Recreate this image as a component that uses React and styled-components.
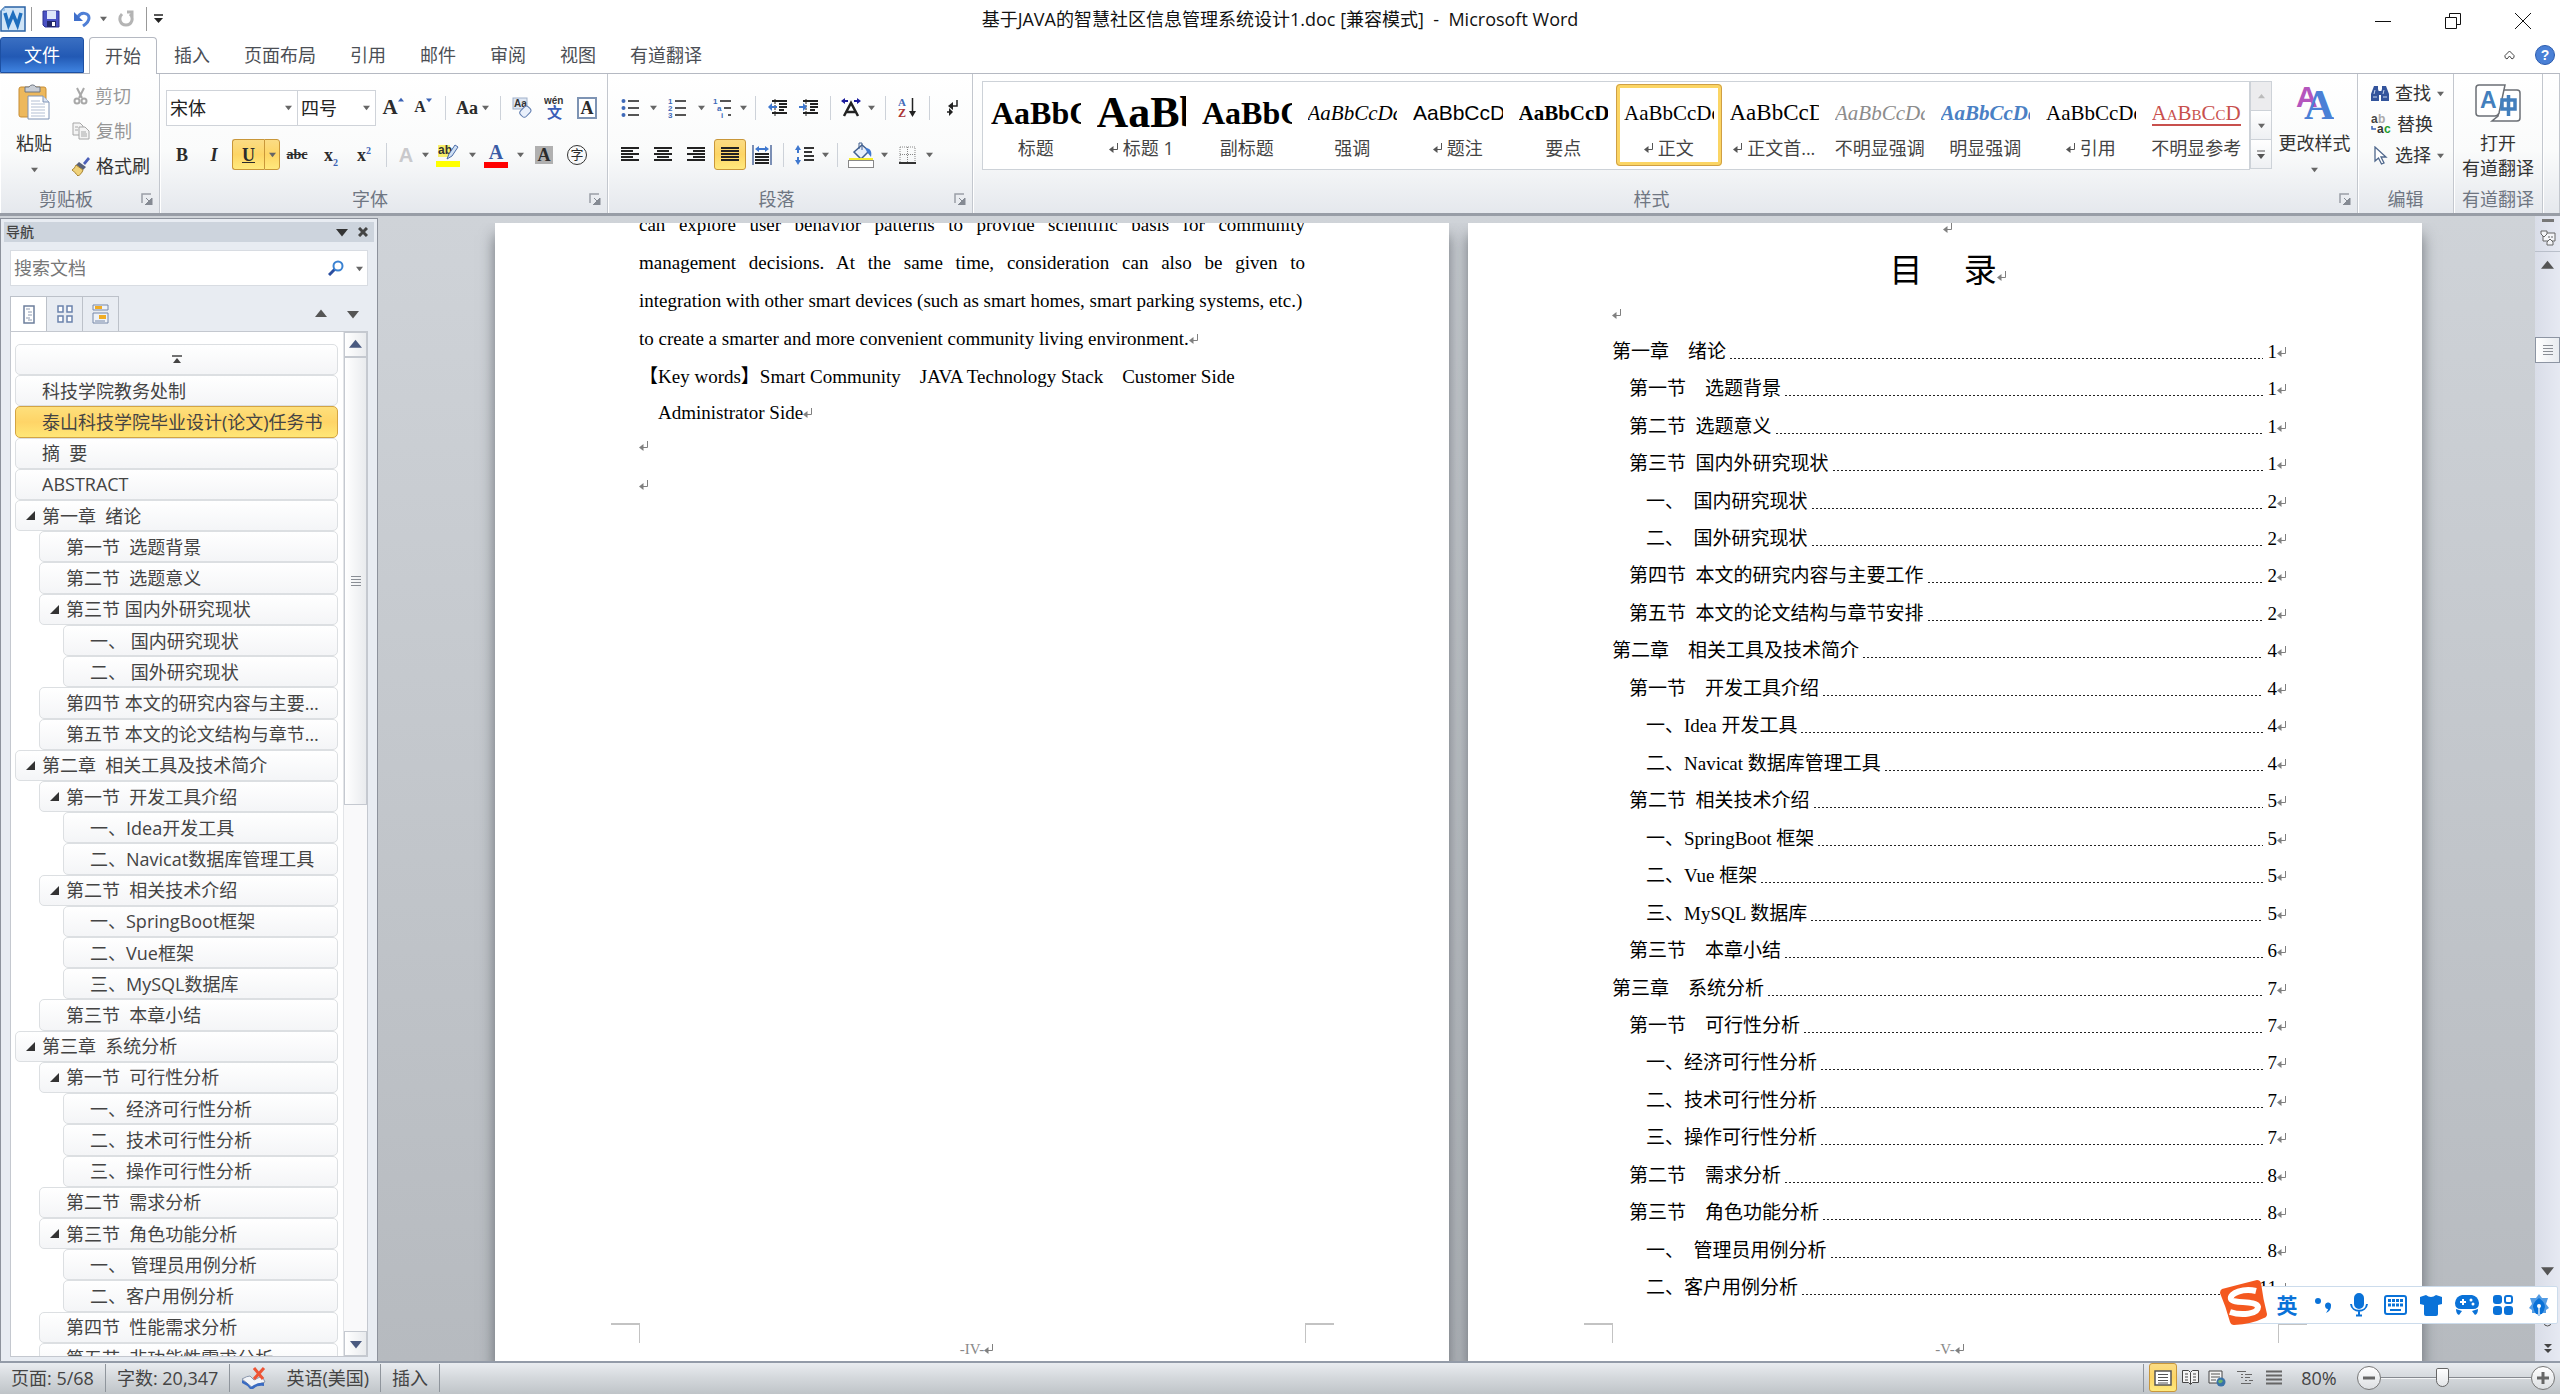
import styled, { createGlobalStyle, css } from "styled-components";

const GlobalStyle = createGlobalStyle`
  * {
    box-sizing: border-box;
  }

  body {
    margin: 0;
    overflow: hidden;
    font-family: "Open Sans", "Noto Sans CJK SC", sans-serif;
    font-size: 18px;
    line-height: 24px;
    color: #333;
  }

  button,
  input,
  select {
    font: inherit;
    color: inherit;
    padding: 0;
    border: none;
    background: none;
  }

  a {
    color: inherit;
    text-decoration: none;
  }

  svg {
    display: block;
    flex-shrink: 0;
  }
`;

const Window = styled.div`
  height: 100vh;
  display: flex;
  flex-direction: column;
  background: #fff;
`;

/* ---------- title bar ---------- */

const TitleBar = styled.header`
  height: 37px;
  display: grid;
  grid-template-columns: 1fr auto 1fr;
  align-items: center;
  flex-shrink: 0;
`;

const QuickAccess = styled.div`
  display: flex;
  align-items: center;
  height: 32px;
`;

const Title = styled.h1`
  margin: 0;
  font-size: 18px;
  font-weight: 400;
  color: #111;
  white-space: pre;
`;

const WindowButtons = styled.div`
  display: flex;
  justify-content: flex-end;
  padding: 5px 2px 0 0;
`;

const WindowButton = styled.button`
  width: 70px;
  height: 32px;
  display: flex;
  align-items: center;
  justify-content: center;
`;

const Slot = styled.button`
  width: ${(props) => props.$w}px;
  height: 30px;
  display: flex;
  align-items: ${(props) => (props.$top ? "flex-start" : "center")};
  padding-top: ${(props) => (props.$top ? 4 : 0)}px;
  justify-content: center;
  flex-shrink: 0;
`;

const SepBox = styled.span`
  width: ${(props) => props.$w}px;
  display: flex;
  justify-content: center;
  flex-shrink: 0;

  &::before {
    content: "";
    width: 1px;
    height: ${(props) => props.$h || 24}px;
    background: ${(props) => props.$color || "#cdd2d9"};
  }
`;

/* ---------- ribbon tabs ---------- */

const TabRow = styled.nav`
  height: 37px;
  display: flex;
  align-items: flex-end;
  flex-shrink: 0;
  border-bottom: 1px solid #b5b9c2;
`;

const FileTab = styled.button`
  width: 84px;
  height: 36px;
  margin-right: 5px;
  color: #fff;
  border: 1px solid #1d50a3;
  border-radius: 3px 3px 0 0;
  background: linear-gradient(#3a6fc2, #2259b4 55%, #3f83e0);
`;

const Tab = styled.button`
  height: 36px;
  padding: 0 17px;
  color: #4c4f55;

  ${(props) =>
    props.$active &&
    css`
      padding: 0 15px;
      margin-bottom: -1px;
      height: 37px;
      border: 1px solid #b5b9c2;
      border-bottom: none;
      border-radius: 4px 4px 0 0;
      background: #fff;
    `}
`;

const HelpArea = styled.div`
  margin-left: auto;
  display: flex;
  align-items: center;
  gap: 20px;
  height: 36px;
  padding-right: 5px;
`;

/* ---------- ribbon ---------- */

const Ribbon = styled.div`
  height: 142px;
  display: flex;
  flex-shrink: 0;
  background: linear-gradient(#fff, #fafbfb 55%, #e5e8ed);
  border-bottom: 3px solid #989da6;
`;

const Group = styled.section`
  width: ${(props) => (props.$w ? `${props.$w}px` : "auto")};
  flex: ${(props) => (props.$w ? "none" : "1")};
  display: flex;
  flex-direction: column;
  border-right: 1px solid #c3c7ce;
  box-shadow: inset 1px 0 #fff;
  min-width: 0;
`;

const GroupBody = styled.div`
  height: 111px;
  display: flex;
  padding-left: ${(props) => props.$pl || 0}px;
`;

const GroupFooter = styled.footer`
  display: flex;
  align-items: center;
  height: 28px;
  color: #6f7682;
  white-space: nowrap;

  span {
    flex: 1;
    text-align: center;
  }

  button {
    width: 27px;
    display: flex;
    justify-content: flex-end;
    padding-right: 6px;
  }
`;

const BigButton = styled.button`
  width: ${(props) => props.$w}px;
  display: flex;
  flex-direction: column;
  align-items: center;
  padding-top: 10px;
  white-space: nowrap;

  span {
    margin: 11px 0;
  }
`;

const SideList = styled.div`
  display: flex;
  flex-direction: column;
  gap: ${(props) => props.$gap}px;
  padding: ${(props) => props.$pt}px 0 0 4px;
`;

const SideButton = styled.button`
  display: flex;
  align-items: center;
  gap: 6px;
  height: 24px;
  white-space: nowrap;
  opacity: ${(props) => (props.$dim ? 0.5 : 1)};
`;

const ToolRow = styled.div`
  display: flex;
  align-items: center;
  height: 47px;
`;

const ToolRows = styled.div`
  padding-top: 10px;
`;

const ComboBox = styled.div`
  width: ${(props) => props.$w}px;
  height: 36px;
  display: flex;
  align-items: center;
  border: 1px solid #cfd3d9;
  background: #fff;

  & + & {
    border-left: none;
  }

  select {
    appearance: none;
    flex: 1;
    min-width: 0;
    padding-left: 3px;
    color: #222;
    outline: none;
  }

  svg {
    margin-right: 5px;
  }
`;

const HotButton = styled.button`
  height: 31px;
  width: ${(props) => props.$w}px;
  display: flex;
  align-items: center;
  justify-content: center;
  flex-shrink: 0;
  border: 1px solid #c9973a;
  border-radius: 3px;
  background: linear-gradient(#fbdc84, #fdd565 50%, #ffe97d);
`;

const SplitHot = styled.div`
  display: flex;
  margin-left: 2px;

  ${HotButton}:first-child {
    border-radius: 3px 0 0 3px;
    border-right: none;
  }

  ${HotButton}:last-child {
    border-radius: 0 3px 3px 0;
  }
`;

const Glyph = styled.span`
  font-family: ${(props) =>
    props.$sans ? '"Liberation Sans"' : '"Liberation Serif"'},
    "Noto Sans CJK SC", serif;
  font-size: ${(props) => props.$size || 18}px;
  line-height: 20px;
  font-weight: ${(props) => (props.$light ? 400 : 700)};
  font-style: ${(props) => (props.$italic ? "italic" : "normal")};
  text-decoration: ${(props) => props.$line || "none"};
  color: ${(props) => props.$color || "#2b2b2b"};

  sup,
  sub {
    font-size: 10px;
    line-height: 0;
    color: #3a62b5;
  }
`;

const BoxedA = styled(Glyph)`
  width: ${(props) => (props.$filled ? 18 : 20)}px;
  height: ${(props) => (props.$filled ? 18 : 22)}px;
  line-height: 18px;
  text-align: center;
  border: ${(props) => (props.$filled ? "none" : "2px solid #7d93b3")};
  background: ${(props) => (props.$filled ? "#b0b0b0" : "#fff")};
`;

const CircledChar = styled(Glyph)`
  width: 20px;
  height: 20px;
  line-height: 18px;
  text-align: center;
  border: 1px solid #333;
  border-radius: 50%;
`;

const ColorBarButton = styled(Slot)`
  flex-direction: column;

  &::after {
    content: "";
    width: 24px;
    height: 6px;
    background: ${(props) => props.$bar};
    border: ${(props) => (props.$outline ? "1px solid #888" : "none")};
  }
`;

/* ---------- style gallery ---------- */

const GalleryWrap = styled.div`
  flex: 1;
  min-width: 0;
  display: flex;
  padding: 7px 0 0 9px;
`;

const Gallery = styled.div`
  flex: 1;
  min-width: 0;
  height: 89px;
  display: flex;
  background: #fff;
  border: 1px solid #cdd2d8;
`;

const StyleCard = styled.button`
  flex: 1 1 0;
  min-width: 0;
  height: 82px;
  margin-top: 2px;
  padding: 0 4px;
  border: 4px solid transparent;
  border-radius: 4px;

  ${(props) =>
    props.$active &&
    css`
      border-color: #fbd564;
      outline: 1px solid #cf9f45;
      outline-offset: -1px;
    `}
`;

const Preview = styled.div`
  height: 46px;
  line-height: 50px;
  overflow: hidden;
  text-align: left;
  white-space: nowrap;
  font-family: ${(props) =>
    props.$sans ? '"Liberation Sans", sans-serif' : '"Liberation Serif", serif'};
  font-size: ${(props) => props.$size || 21}px;
  font-weight: ${(props) => (props.$bold ? 700 : 400)};
  font-style: ${(props) => (props.$italic ? "italic" : "normal")};
  font-variant: ${(props) => (props.$caps ? "small-caps" : "normal")};
  text-decoration: ${(props) => (props.$caps ? "underline" : "none")};
  text-underline-offset: 4px;
  color: ${(props) => props.$color || "#000"};
`;

const StyleName = styled.div`
  display: flex;
  align-items: center;
  justify-content: center;
  gap: 4px;
  height: 28px;
  white-space: nowrap;
  color: #444;
`;

const GalleryScroll = styled.div`
  width: 22px;
  height: 88px;
  display: flex;
  flex-direction: column;

  button {
    flex: 1;
    display: flex;
    align-items: center;
    justify-content: center;
    border: 1px solid #cdd2d8;
    border-bottom: none;
    background: linear-gradient(#fff, #eef0f3);
  }

  button:first-child {
    background: #ececee;
  }

  button:last-child {
    border-bottom: 1px solid #cdd2d8;
  }
`;

/* ---------- work area ---------- */

const WorkArea = styled.main`
  flex: 1;
  min-height: 0;
  display: flex;
  background: linear-gradient(#cfd3d8, #b6babf);
`;

const NavPane = styled.aside`
  width: 378px;
  flex-shrink: 0;
  display: flex;
  flex-direction: column;
  margin-top: 2px;
  padding: 3px 3px 4px;
  background: #e8ecf2;
  border: 1px solid #8d929c;
  border-bottom: none;
`;

const NavHeader = styled.div`
  height: 20px;
  display: flex;
  align-items: center;
  gap: 10px;
  padding: 0 6px 0 2px;
  background: #cdd4dd;
  font-size: 14px;
  line-height: 20px;
  flex-shrink: 0;

  h2 {
    margin: 0 auto 0 0;
    font-size: 14px;
    font-weight: 500;
    color: #444;
  }

  button {
    display: flex;
  }
`;

const SearchBox = styled.form`
  height: 36px;
  margin: 8px 6px 10px;
  display: flex;
  align-items: center;
  gap: 12px;
  padding: 0 4px 0 3px;
  background: #fff;
  border: 1px solid #d8dce2;
  flex-shrink: 0;

  input {
    flex: 1;
    min-width: 0;
    outline: none;
  }

  input::placeholder {
    color: #777;
  }
`;

const NavTabs = styled.div`
  display: flex;
  height: 36px;
  margin: 0 6px;
  flex-shrink: 0;
`;

const NavTab = styled.button`
  width: 37px;
  height: 36px;
  margin-right: -1px;
  display: flex;
  align-items: center;
  justify-content: center;
  border: 1px solid #bcc1c9;
  ${(props) =>
    props.$active &&
    css`
      background: #fff;
      border-bottom-color: #fff;
    `}
`;

const NavArrows = styled.div`
  margin-left: auto;
  display: flex;
  gap: 20px;
  padding-right: 9px;

  button {
    display: flex;
    align-items: center;
  }
`;

const NavBody = styled.div`
  flex: 1;
  min-height: 0;
  display: flex;
  margin: -1px 6px 0;
  background: #fff;
  border: 1px solid #c4c8cf;
`;

const NavList = styled.div`
  flex: 1;
  min-width: 0;
  padding: 12px 5px 0 4px;
  overflow: hidden;
`;

const NavTree = styled.nav`
  height: 1030px;
  display: grid;
  grid-auto-rows: 1fr;
`;

const NavItem = styled.a`
  margin-left: ${(props) => props.$level * 24}px;
  display: flex;
  align-items: center;
  padding-right: 8px;
  border: 1px solid #dcdfe2;
  border-radius: 5px;
  background: linear-gradient(#fff, #f4f5f7);
  color: #444;
  white-space: pre;
  min-width: 0;

  ${(props) =>
    props.$active &&
    css`
      border-color: #d3a443;
      background: linear-gradient(#fee07c, #fed467 50%, #ffe777);
    `}

  span {
    overflow: hidden;
    text-overflow: ellipsis;
  }
`;

const NavTop = styled(NavItem)`
  justify-content: center;
  padding: 0;
`;

const Twisty = styled.i`
  width: 26px;
  padding-left: 10px;
  flex-shrink: 0;
`;

const NavScroll = styled.div`
  width: 24px;
  display: flex;
  flex-direction: column;
  background: #f9f9fa;
  border-left: 1px solid #e3e5e8;
`;

const ScrollButton = styled.button`
  height: 25px;
  flex-shrink: 0;
  display: flex;
  align-items: center;
  justify-content: center;
  border: 1px solid #c5c9d0;
  background: linear-gradient(90deg, #fff, #e9ebee);
`;

const ScrollThumb = styled(ScrollButton)`
  height: ${(props) => props.$h}px;
`;

const NavScrollEnd = styled(ScrollButton)`
  margin-top: auto;
`;

/* ---------- document ---------- */

const Canvas = styled.div`
  flex: 1;
  min-width: 0;
  display: flex;
  justify-content: center;
  gap: 19px;
  margin-top: 7px;
  padding-left: 4px;
  overflow: hidden;
`;

const Page = styled.article`
  width: 954px;
  flex-shrink: 0;
  display: flex;
  flex-direction: column;
  background: #fff;
  box-shadow: 0 12px 14px rgba(60, 65, 72, 0.65);
  font-family: "Liberation Serif", "Noto Sans CJK SC", serif;
  font-size: 19px;
  color: #000;
`;

const PageBody = styled.div`
  flex: 1;
  min-height: 0;
  overflow: hidden;
  padding: 0 144px;
`;

const Abstract = styled.div`
  margin-top: -17px;
`;

const TextLine = styled.p`
  margin: 0;
  line-height: ${(props) => props.$lh || 38}px;
  white-space: ${(props) => (props.$justify ? "normal" : "pre")};
  text-align-last: ${(props) => (props.$justify ? "justify" : "left")};
  padding-left: ${(props) => props.$indent || 0}px;

  svg {
    display: inline-block;
  }
`;

const EmptyLine = styled.div`
  height: ${(props) => props.$h}px;
  display: flex;
  align-items: center;
  justify-content: ${(props) => (props.$center ? "center" : "flex-start")};
  padding-left: ${(props) => (props.$center ? 6 : 0)}px;
`;

const TocTitle = styled.h2`
  margin: 0;
  height: 62px;
  line-height: 76px;
  padding-left: 6px;
  font-size: 33px;
  font-weight: 400;
  text-align: center;
  white-space: pre;

  svg {
    display: inline-block;
  }
`;

const Toc = styled.nav`
  height: 974px;
  display: grid;
  grid-auto-rows: 1fr;
`;

const TocRow = styled.a`
  display: flex;
  align-items: center;
  padding-left: ${(props) => props.$level * 17}px;
  margin-right: -9px;
  white-space: pre;
`;

const Leader = styled.span`
  flex: 1;
  height: 1px;
  margin: 13px 5px 0 4px;
  background: repeating-linear-gradient(90deg, #222 0 2px, transparent 2px 4px);
`;

const PageFooter = styled.footer`
  height: 38px;
  flex-shrink: 0;
  display: flex;
  justify-content: space-between;
  padding: 0 115px 0 116px;
  font-size: 15px;
  color: #888;

  span {
    display: flex;
    align-items: center;
    padding: 14px 0 0 9px;
  }
`;

const Crop = styled.i`
  width: 29px;
  height: 20px;
  border-top: 2px solid #c3c3c3;
  border-left: ${(props) => (props.$right ? "1px solid #c3c3c3" : "none")};
  border-right: ${(props) => (props.$right ? "none" : "1px solid #c3c3c3")};
`;

const DocScroll = styled.div`
  width: 25px;
  flex-shrink: 0;
  display: flex;
  flex-direction: column;
  align-items: center;
  background: linear-gradient(90deg, #d9dde8, #e6e9f2);

  button {
    display: flex;
    align-items: center;
    justify-content: center;
    width: 25px;
  }
`;

const SplitHandle = styled.button`
  height: 8px;
`;

const RulerToggle = styled.button`
  height: 28px;
  border-bottom: 1px solid #b9bfca;
`;

const DocArrow = styled.button`
  height: 26px;
`;

const DocThumb = styled.button`
  height: 26px;
  margin-top: 59px;
  border: 1px solid #8d95a3;
  background: linear-gradient(90deg, #fff, #e8ebf0);
`;

const DocScrollEnd = styled.div`
  margin-top: auto;
  display: flex;
  flex-direction: column;
`;

/* ---------- status bar ---------- */

const StatusBar = styled.footer`
  height: 33px;
  flex-shrink: 0;
  display: flex;
  align-items: center;
  padding-bottom: 2px;
  border-top: 2px solid #939ba8;
  background: linear-gradient(#e9ecf0, #d3d7db 50%, #bfc4c8);
  color: #444;
  white-space: nowrap;
`;

const StatusItem = styled.button`
  padding: 0 11px;
  display: flex;
  align-items: center;
  gap: 20px;
`;

const StatusRight = styled.div`
  margin-left: auto;
  display: flex;
  align-items: center;
  padding-right: 5px;
`;

const ViewHot = styled(HotButton)`
  height: 29px;
`;

const ZoomLabel = styled.button`
  width: 64px;
  text-align: center;
`;

const ZoomButton = styled.button`
  width: 24px;
  height: 24px;
  margin-left: ${(props) => props.$ml || 0}px;
  border: 1px solid #777;
  border-radius: 50%;
  background: linear-gradient(#fff, #dcdfe2);
  display: flex;
  align-items: center;
  justify-content: center;
`;

const ZoomSlider = styled.input`
  appearance: none;
  width: 150px;
  height: 24px;
  margin: 0;
  outline: none;

  &::-webkit-slider-runnable-track {
    height: 2px;
    background: linear-gradient(#85898f 50%, #f4f5f6 50%);
  }

  &::-webkit-slider-thumb {
    appearance: none;
    width: 13px;
    height: 19px;
    margin-top: -9px;
    border: 1px solid #666;
    border-radius: 2px 2px 7px 7px;
    background: linear-gradient(#fff, #e3e5e8);
  }
`;

/* ---------- floating input method bar ---------- */

const ImeBar = styled.div`
  position: absolute;
  right: 2px;
  bottom: 70px;
  height: 38px;
  display: flex;
  align-items: center;
  padding-left: 30px;
  background: #fff;
  border: 1px solid #ccdcec;
  border-radius: 2px;
  color: #0a72d8;

  button {
    width: 36px;
    height: 36px;
    display: flex;
    align-items: center;
    justify-content: center;
    font-size: 21px;
    font-weight: 700;
  }
`;

const ImeLogo = styled.svg`
  position: absolute;
  left: -20px;
  top: -8px;
`;

/* ---------- small drawings ---------- */

const Down = ({ size = 7, color = "#666" }) => (
  <svg width={size} height={size} viewBox="0 0 8 8" aria-hidden="true">
    <path d="M0 2h8L4 7z" fill={color} />
  </svg>
);

const Up = ({ size = 7, color = "#666" }) => (
  <svg width={size} height={size} viewBox="0 0 8 8" aria-hidden="true">
    <path d="M0 6h8L4 1z" fill={color} />
  </svg>
);

const Mark = ({ color = "#808080" }) => (
  <svg width="10" height="12" viewBox="0 0 10 12" aria-hidden="true">
    <path d="M8.500 1v6.500H4" fill="none" stroke={color} strokeWidth="1" />
    <path d="M0 7.500l4.500-3.500v7z" fill={color} />
  </svg>
);

const Launcher = () => (
  <button aria-label="更多选项">
    <svg width="12" height="12" viewBox="0 0 12 12">
      <path d="M1 10V1h9" fill="none" stroke="#9a9fa7" strokeWidth="1.500" />
      <path d="M5 5l4 4M11 5v7H4z" fill="#858a93" stroke="#858a93" />
    </svg>
  </button>
);

const Grip = () => (
  <svg width="10" height="10" viewBox="0 0 10 10">
    <path d="M0 .5h10M0 3.500h10M0 6.500h10M0 9.500h10" stroke="#8a8e95" />
  </svg>
);

const Lines = ({ rows, color = "#222", size = 18 }) => (
  <svg width={size} height="16" viewBox="0 0 18 16">
    {rows.map(([x, w], i) => (
      <rect key={i} x={x} y={i * 3} width={w} height="2" fill={color} />
    ))}
  </svg>
);

const leftRows = [[0, 18], [0, 12], [0, 18], [0, 12], [0, 18]];
const centerRows = [[0, 18], [3, 12], [0, 18], [3, 12], [0, 18]];
const rightRows = [[0, 18], [6, 12], [0, 18], [6, 12], [0, 18]];
const fullRows = [[0, 18], [0, 18], [0, 18], [0, 18], [0, 18]];

const WordLogo = () => (
  <svg width="26" height="26" viewBox="0 0 26 26">
    <path d="M5 1h20v24H1V5z" fill="#cfe4f7" stroke="#2a62a5" strokeWidth="1.500" />
    <path d="M5 1v4H1" fill="#9cc4ea" />
    <path d="M5 7l3.500 12L13 8l4.500 11L21 7" fill="none" stroke="#1f6fbe" strokeWidth="3.500" />
  </svg>
);

const SaveIcon = () => (
  <svg width="18" height="18" viewBox="0 0 18 18">
    <path d="M1 1h16v16H3l-2-2z" fill="#4a52c4" stroke="#2e3391" />
    <rect x="5" y="1" width="9" height="8" fill="#dfe6fa" />
    <rect x="5" y="11" width="9" height="6" fill="#23286b" />
    <rect x="10" y="12" width="3" height="4" fill="#fff" />
  </svg>
);

const UndoIcon = ({ redo }) => (
  <svg width="17" height="18" viewBox="0 0 17 18">
    {redo ? (
      <path d="M4 4C0 8 2 15 8 15s8-7 4-11M9 2h5v6" fill="none" stroke="#b4b4b4" strokeWidth="3" />
    ) : (
      <>
        <path d="M4 7c3-6 11-4 11 1 0 4-3 6-6 8" fill="none" stroke="#4f7fd6" strokeWidth="3" />
        <path d="M0 2v9h9z" fill="#3f6fcb" />
      </>
    )}
  </svg>
);

const PasteIcon = () => (
  <svg width="32" height="36" viewBox="0 0 32 36">
    <rect x="1" y="3" width="27" height="30" rx="2" fill="#edb85c" stroke="#c78d35" />
    <path d="M7 3h4a4 4 0 0 1 7 0h4v5H7z" fill="#c9ced6" stroke="#6f7682" />
    <path d="M10 12h15l6 6v17H10z" fill="#fff" stroke="#7f93b5" />
    <path d="M25 12v6h6" fill="#dce5f3" stroke="#7f93b5" />
    <path d="M13 17h9M13 20h14M13 23h14M13 26h14M13 29h14M13 32h14" stroke="#b3bfd3" />
  </svg>
);

const CutIcon = () => (
  <svg width="17" height="18" viewBox="0 0 17 18" fill="none" stroke="#555" strokeWidth="2">
    <path d="M5 1l5 10M12 1L7 11" />
    <circle cx="5" cy="14" r="2.500" />
    <circle cx="12" cy="14" r="2.500" />
  </svg>
);

const CopyIcon = () => (
  <svg width="18" height="18" viewBox="0 0 18 18" fill="#eee" stroke="#555">
    <path d="M1 1h7l3 3v9H1z" />
    <path d="M7 5h6l4 4v8H7z" />
    <path d="M9 10h5M9 12h6M9 14h6M3 5h3M3 8h3" />
  </svg>
);

const BrushIcon = () => (
  <svg width="18" height="19" viewBox="0 0 18 19">
    <path d="M11 6l5-6 2 2-5 6z" fill="#4b5fb8" />
    <path d="M7 5l7 5-3 3-7-5z" fill="#59617a" />
    <path d="M4 8l7 5c-1 3-3 5-5 6-2-2-4-5-6-6 2-1 3-3 4-5z" fill="#f0d27a" stroke="#a5812d" />
  </svg>
);

const EraserIcon = () => (
  <svg width="20" height="22" viewBox="0 0 20 22">
    <rect x="1" y="1" width="14" height="11" fill="#dfe7f3" stroke="#9fb0c9" />
    <text x="2" y="10" fontSize="10" fontFamily="Liberation Sans" fontWeight="700" fill="#333">Aa</text>
    <rect x="8" y="11" width="11" height="8" rx="3" fill="#e9f0fb" stroke="#5b79ad" transform="rotate(-45 13 15)" />
  </svg>
);

const PinyinIcon = () => (
  <svg width="22" height="24" viewBox="0 0 22 24">
    <text x="0" y="8" fontSize="10" fontFamily="Liberation Sans" fontWeight="700" fill="#333">wén</text>
    <text x="3" y="22" fontSize="15" fontFamily="Noto Sans CJK SC" fontWeight="700" fill="#3a5fb8">文</text>
  </svg>
);

const HighlightIcon = () => (
  <svg width="24" height="18" viewBox="0 0 24 18">
    <rect x="2" y="2" width="12" height="12" fill="#f6ee6a" />
    <text x="2" y="11" fontSize="12" fontFamily="Liberation Sans" fontWeight="700" fill="#333">ab</text>
    <path d="M11 16l2-5 6-9 3 2-6 9z" fill="#cfe0f5" stroke="#4c6da8" />
  </svg>
);

const ListIcon = ({ kind }) => (
  <svg width="19" height="22" viewBox="0 0 19 22">
    {[4, 11, 18].map((y, i) => (
      <g key={y}>
        {kind === "bullet" ? (
          <circle cx={2.5} cy={y} r="2" fill="#3f69b8" />
        ) : (
          <text
            x={kind === "multi" ? i * 4 : 0}
            y={y + 3}
            fontSize="8"
            fontWeight="700"
            fontFamily="Liberation Sans"
            fill="#3f69b8"
          >
            {kind === "multi" ? "1ai"[i] : i + 1}
          </text>
        )}
        <path
          d={`M${kind === "multi" ? 7 + i * 4 : 7} ${y}H18`}
          stroke="#555"
          strokeWidth="2"
        />
      </g>
    ))}
  </svg>
);

const IndentIcon = ({ right }) => (
  <svg width="20" height="18" viewBox="0 0 20 18">
    <path d="M4 2h15M11 5h8M11 8h8M11 11h5M4 14h15" stroke="#222" strokeWidth="2" />
    <path d="M7 0v18" stroke="#222" strokeDasharray="2 1" />
    <path d={right ? "M8 8L4 4v3H0v2h4v3z" : "M0 8l4-4v3h5v2H4v3z"} fill="#3f78cf" />
  </svg>
);

const AsianLayoutIcon = () => (
  <svg width="20" height="20" viewBox="0 0 20 20">
    <path d="M0 3l4-3v2h3v2H4v2zM20 3l-4-3v2h-3v2h3v2z" fill="#1c1c9c" />
    <path d="M3 18L10 5l7 13M6 14h8" fill="none" stroke="#222" strokeWidth="2.500" />
  </svg>
);

const SortIcon = () => (
  <svg width="18" height="22" viewBox="0 0 18 22">
    <text x="0" y="9" fontSize="11" fontWeight="700" fontFamily="Liberation Serif" fill="#3f69b8">A</text>
    <text x="0" y="20" fontSize="12" fontWeight="700" fontFamily="Liberation Serif" fill="#a33">Z</text>
    <path d="M14.500 1v16" stroke="#222" strokeWidth="1.500" />
    <path d="M11 14h7l-3.500 6z" fill="#222" />
  </svg>
);

const ShowMarksIcon = () => (
  <svg width="14" height="18" viewBox="0 0 14 18">
    <path d="M12 1v6H6M2 13h5" fill="none" stroke="#222" strokeWidth="1.500" />
    <path d="M3 7l5-4v8zM8 13l-4-4v8z" fill="#222" />
  </svg>
);

const DistributeIcon = () => (
  <svg width="20" height="20" viewBox="0 0 20 20">
    <path d="M1 0v20M19 0v20" stroke="#7b8fb5" strokeWidth="2" />
    <path d="M3 4l4-3v2h6V1l4 3-4 3V5H7v2z" fill="#3f78cf" />
    <path d="M3 9h14M3 12h14M3 15h14M3 18h14" stroke="#222" strokeWidth="2" />
  </svg>
);

const LineSpacingIcon = () => (
  <svg width="19" height="20" viewBox="0 0 19 20">
    <path d="M3 0l3 5H0zM3 20l3-5H0z" fill="#3f78cf" />
    <path d="M3 5v3M3 12v3" stroke="#3f78cf" strokeWidth="2" />
    <path d="M9 3h10M9 7h8M9 11h10M9 15h10" stroke="#333" strokeWidth="2" />
  </svg>
);

const FillIcon = () => (
  <svg width="24" height="18" viewBox="0 0 24 18">
    <path d="M5 10l8-7 7 6-8 8z" fill="#e6eefa" stroke="#42608f" strokeWidth="1.500" />
    <path d="M13 8V1h-3v6" fill="none" stroke="#42608f" />
    <path d="M16 6c6 0 7 4 6 9l-4-5z" fill="#3f78cf" />
    <path d="M0 17h24" stroke="#f4ec2c" strokeWidth="2" />
  </svg>
);

const BorderIcon = () => (
  <svg width="17" height="18" viewBox="0 0 17 18" fill="none" stroke="#888">
    <path d="M1 1h15v15M1 1v15M8.500 1v15M1 8.500h15" strokeDasharray="1 1" />
    <path d="M0 17h17" stroke="#333" strokeWidth="2" />
  </svg>
);

const ChangeStylesIcon = () => (
  <svg width="38" height="36" viewBox="0 0 38 36">
    <text x="0" y="23" fontSize="30" fontFamily="Liberation Sans" fontWeight="700" fill="#b455bd">A</text>
    <text x="8" y="35" fontSize="42" fontWeight="700" fontFamily="Liberation Serif" fill="#4a80d6">A</text>
  </svg>
);

const FindIcon = () => (
  <svg width="18" height="17" viewBox="0 0 18 17" fill="#33549c">
    <path d="M3 1h4v3l1 3v9H0V9zM11 1h4l3 8v7h-8V7l1-3zM7 6h4v4H7z" />
    <path d="M2 12h4M12 12h4M3 9l1-4M12 9l1-4" stroke="#c7d5f0" />
  </svg>
);

const ReplaceIcon = () => (
  <svg width="20" height="20" viewBox="0 0 20 20" fontFamily="Liberation Sans" fontWeight="700" fontSize="12">
    <text x="0" y="9" fill="#444">a</text>
    <text x="7" y="9" fill="#aaa">b</text>
    <text x="6" y="19" fill="#333">a</text>
    <text x="13" y="19" fill="#1f9b2b">c</text>
    <path d="M1 12v3h4" fill="none" stroke="#3a62b5" strokeWidth="1.500" />
  </svg>
);

const SelectIcon = () => (
  <svg width="18" height="19" viewBox="0 0 18 19">
    <path d="M4 1v14l3.500-3 3 6 2.500-1-3-6h5z" fill="#fff" stroke="#4f678c" strokeWidth="1.300" />
  </svg>
);

const TranslateIcon = () => (
  <svg width="46" height="38" viewBox="0 0 46 38" fill="#fff" stroke="#6b6f75" strokeWidth="1.500">
    <path d="M28 6h14q3 0 3 3v25q0 3-3 3H17l6-5z" />
    <path d="M4 1h26l-6 28q-1 3-4 3H4q-3 0-3-3V4q0-3 3-3z" />
    <text x="5" y="24" fontSize="23" fontWeight="700" fontFamily="Liberation Sans" fill="#437fbd" stroke="none">A</text>
    <path d="M27 16h13v9H27zM33.500 11v21" fill="none" stroke="#437fbd" strokeWidth="3.500" />
  </svg>
);

const SearchIcon = () => (
  <svg width="16" height="16" viewBox="0 0 16 16" fill="none">
    <path d="M1 15l6-6" stroke="#2b4ea0" strokeWidth="3" />
    <circle cx="10" cy="6" r="4.500" stroke="#3a82d2" strokeWidth="2" />
  </svg>
);

const navTabIcons = [
  <svg key="doc" width="12" height="19" viewBox="0 0 12 19">
    <rect x="1" y="1" width="10" height="17" fill="#fff" stroke="#6d7f9c" strokeWidth="1.500" />
    <path d="M3 4h4M5 7h4M5 10h4M3 13h4M5 15h4" stroke="#8e9ab0" />
  </svg>,
  <svg key="pages" width="16" height="18" viewBox="0 0 16 18" fill="#fff" stroke="#6b83ad" strokeWidth="1.500">
    <path d="M1 1h5v6H1zM10 1h5v6h-5zM1 11h5v6H1zM10 11h5v6h-5z" />
  </svg>,
  <svg key="results" width="17" height="20" viewBox="0 0 17 20">
    <path d="M1 1h15v5H1zM1 9h15v10H1z" fill="#eef2f8" stroke="#7688a8" />
    <path d="M3 2h7v3H3zM7 11h7v4H7z" fill="#f0ac24" />
    <path d="M3 17h10" stroke="#7688a8" />
  </svg>,
];

const ProofIcon = () => (
  <svg width="25" height="24" viewBox="0 0 25 24">
    <path d="M1 13q5-3 8-3l4 4 8-4 3 6q-6 1-12 6z" fill="#f2f4f8" stroke="#8b97ad" />
    <path d="M1 14q5 2 9 7 6-5 13-4v3q-7-1-11 3H9q-3-4-8-6z" fill="#3a6bc2" />
    <path d="M13 2l9 11M23 2L13 13" stroke="#ee5435" strokeWidth="3" />
  </svg>
);

const ReadIcon = () => (
  <svg width="17" height="17" viewBox="0 0 17 17" fill="#f4f4f4" stroke="#444">
    <path d="M.5 1.500h6l2 2 2-2h6v12h-6l-2 2-2-2h-6zM8.500 4v11M3 5h3M3 8h3M3 11h3M11 5h3M11 8h3M11 11h3" />
  </svg>
);

const WebIcon = () => (
  <svg width="18" height="18" viewBox="0 0 18 18">
    <path d="M1 2h13v12H1z" fill="#f4f4f4" stroke="#444" />
    <path d="M3 5h9M3 8h9M3 11h5" stroke="#555" />
    <circle cx="13" cy="13" r="4.500" fill="#3a72a8" />
    <path d="M10 12q3-3 5 0-2 3-4 2z" fill="#6fb56a" />
  </svg>
);

const PrintLayoutIcon = () => (
  <svg width="18" height="16" viewBox="0 0 18 16">
    <path d="M1 1h16v14H1z" fill="#fff" stroke="#555" strokeWidth="1.500" />
    <path d="M4 4.500h10M4 7.500h10M4 10.500h10M4 13h10" stroke="#555" />
  </svg>
);

const ThinLines = ({ outline }) => (
  <svg width="16" height="15" viewBox="0 0 16 15" stroke="#666">
    <path
      d={
        outline
          ? "M0 1.500h9M4 4.500h2M8 4.500h7M4 7.500h2M8 7.500h5M8 10.500h2M12 10.500h4M4 13.500h10"
          : "M0 1.500h16M0 5.500h16M0 9.500h16M0 13.500h16"
      }
      strokeWidth={outline ? 1 : 2}
    />
  </svg>
);

const Drop = ({ w = 10 }) => (
  <Slot $w={w} aria-label="展开">
    <Down />
  </Slot>
);

/* ---------- content ---------- */

const tabs = ["插入", "页面布局", "引用", "邮件", "审阅", "视图", "有道翻译"];

const styleCards = [
  { sample: "AaBbCc", name: "标题", size: 32, bold: true },
  { sample: "AaBb", name: "标题 1", size: 44, bold: true, mark: true },
  { sample: "AaBbCc", name: "副标题", size: 32, bold: true },
  { sample: "AaBbCcDd", name: "强调", italic: true },
  { sample: "AaBbCcDd", name: "题注", sans: true, mark: true },
  { sample: "AaBbCcDd", name: "要点", bold: true },
  { sample: "AaBbCcDd", name: "正文", mark: true, active: true },
  { sample: "AaBbCcDd", name: "正文首...", size: 23, mark: true },
  { sample: "AaBbCcDd", name: "不明显强调", italic: true, color: "#8c8c8c" },
  { sample: "AaBbCcDd", name: "明显强调", italic: true, bold: true, color: "#4a80c4" },
  { sample: "AaBbCcDd", name: "引用", mark: true },
  { sample: "AaBbCcDd", name: "不明显参考", caps: true, color: "#c8504d" },
];

// [level, text, has children]
const outline = [
  [0, "科技学院教务处制"],
  [0, "泰山科技学院毕业设计(论文)任务书"],
  [0, "摘  要"],
  [0, "ABSTRACT"],
  [0, "第一章  绪论", true],
  [1, "第一节  选题背景"],
  [1, "第二节  选题意义"],
  [1, "第三节 国内外研究现状", true],
  [2, "一、 国内研究现状"],
  [2, "二、 国外研究现状"],
  [1, "第四节 本文的研究内容与主要工作"],
  [1, "第五节 本文的论文结构与章节安排"],
  [0, "第二章  相关工具及技术简介", true],
  [1, "第一节  开发工具介绍", true],
  [2, "一、Idea开发工具"],
  [2, "二、Navicat数据库管理工具"],
  [1, "第二节  相关技术介绍", true],
  [2, "一、SpringBoot框架"],
  [2, "二、Vue框架"],
  [2, "三、MySQL数据库"],
  [1, "第三节  本章小结"],
  [0, "第三章  系统分析", true],
  [1, "第一节  可行性分析", true],
  [2, "一、经济可行性分析"],
  [2, "二、技术可行性分析"],
  [2, "三、操作可行性分析"],
  [1, "第二节  需求分析"],
  [1, "第三节  角色功能分析", true],
  [2, "一、 管理员用例分析"],
  [2, "二、客户用例分析"],
  [1, "第四节  性能需求分析"],
  [1, "第五节  非功能性需求分析"],
];

// [level, text, page]
const contents = [
  [0, "第一章\u3000绪论", 1],
  [1, "第一节\u3000选题背景", 1],
  [1, "第二节  选题意义", 1],
  [1, "第三节  国内外研究现状", 1],
  [2, "一、  国内研究现状", 2],
  [2, "二、  国外研究现状", 2],
  [1, "第四节  本文的研究内容与主要工作", 2],
  [1, "第五节  本文的论文结构与章节安排", 2],
  [0, "第二章\u3000相关工具及技术简介", 4],
  [1, "第一节\u3000开发工具介绍", 4],
  [2, "一、Idea 开发工具", 4],
  [2, "二、Navicat 数据库管理工具", 4],
  [1, "第二节  相关技术介绍", 5],
  [2, "一、SpringBoot 框架", 5],
  [2, "二、Vue 框架", 5],
  [2, "三、MySQL 数据库", 5],
  [1, "第三节\u3000本章小结", 6],
  [0, "第三章\u3000系统分析", 7],
  [1, "第一节\u3000可行性分析", 7],
  [2, "一、经济可行性分析", 7],
  [2, "二、技术可行性分析", 7],
  [2, "三、操作可行性分析", 7],
  [1, "第二节\u3000需求分析", 8],
  [1, "第三节\u3000角色功能分析", 8],
  [2, "一、  管理员用例分析", 8],
  [2, "二、客户用例分析", 11],
];

function TopBar() {
  return (
    <TitleBar>
      <QuickAccess>
        <WordLogo />
        <SepBox $w={10} $color="#999" />
        <Slot $w={30} aria-label="保存">
          <SaveIcon />
        </Slot>
        <Slot $w={32} aria-label="撤消">
          <UndoIcon />
        </Slot>
        <Drop w={10} />
        <Slot $w={36} aria-label="恢复">
          <UndoIcon redo />
        </Slot>
        <SepBox $w={4} $color="#999" />
        <Slot $w={20} aria-label="自定义快速访问工具栏">
          <svg width="9" height="10" viewBox="0 0 9 10">
            <path d="M0 1h9" stroke="#222" strokeWidth="1.500" />
            <path d="M0 4h9L4.500 9z" fill="#222" />
          </svg>
        </Slot>
      </QuickAccess>
      <Title>基于JAVA的智慧社区信息管理系统设计1.doc [兼容模式]  -  Microsoft Word</Title>
      <WindowButtons>
        <WindowButton aria-label="最小化">
          <svg width="16" height="16" viewBox="0 0 16 16" stroke="#111">
            <path d="M0 8.500h16" />
          </svg>
        </WindowButton>
        <WindowButton aria-label="还原">
          <svg width="16" height="16" viewBox="0 0 16 16" fill="none" stroke="#111">
            <path d="M.5 4.500h11v11H.5zM4.500 4V.5h11v11H12" />
          </svg>
        </WindowButton>
        <WindowButton aria-label="关闭">
          <svg width="16" height="16" viewBox="0 0 16 16" stroke="#111">
            <path d="M0 0l16 16M16 0L0 16" />
          </svg>
        </WindowButton>
      </WindowButtons>
    </TitleBar>
  );
}

function RibbonTabs() {
  return (
    <TabRow>
      <FileTab>文件</FileTab>
      <Tab $active>开始</Tab>
      {tabs.map((tab) => (
        <Tab key={tab}>{tab}</Tab>
      ))}
      <HelpArea>
        <button aria-label="功能区最小化">
          <svg width="11" height="10" viewBox="0 0 11 10" fill="none" stroke="#444">
            <path d="M5.500 1L10 5.500v2L8 9 5.500 6 3 9 1 7.500v-2z" />
          </svg>
        </button>
        <button aria-label="帮助">
          <svg width="20" height="20" viewBox="0 0 20 20">
            <circle cx="10" cy="10" r="9.500" fill="#4a80d6" stroke="#2c5cae" />
            <text x="10" y="15" fontSize="14" fontWeight="700" textAnchor="middle" fontFamily="Liberation Sans" fill="#fff">?</text>
          </svg>
        </button>
      </HelpArea>
    </TabRow>
  );
}

function ClipboardGroup() {
  return (
    <Group $w={160}>
      <GroupBody>
        <BigButton $w={68}>
          <PasteIcon />
          <span>粘贴</span>
          <Down />
        </BigButton>
        <SideList $gap={11} $pt={10}>
          <SideButton $dim>
            <CutIcon />
            剪切
          </SideButton>
          <SideButton $dim>
            <CopyIcon />
            复制
          </SideButton>
          <SideButton>
            <BrushIcon />
            格式刷
          </SideButton>
        </SideList>
      </GroupBody>
      <GroupFooter>
        <span>剪贴板</span>
        <Launcher />
      </GroupFooter>
    </Group>
  );
}

function FontGroup() {
  return (
    <Group $w={448}>
      <GroupBody $pl={6}>
        <ToolRows>
          <ToolRow>
            <ComboBox $w={132}>
              <select aria-label="字体" defaultValue="宋体">
                <option>宋体</option>
              </select>
              <Down />
            </ComboBox>
            <ComboBox $w={78}>
              <select aria-label="字号" defaultValue="四号">
                <option>四号</option>
              </select>
              <Down />
            </ComboBox>
            <Slot $w={34} $top>
              <Glyph $size={21}>A</Glyph>
              <Up size={6} color="#3a62b5" />
            </Slot>
            <Slot $w={26} $top>
              <Glyph $size={16}>A</Glyph>
              <Down size={6} color="#3a62b5" />
            </Slot>
            <SepBox $w={18} />
            <Slot $w={26}>
              <Glyph>Aa</Glyph>
            </Slot>
            <Drop />
            <SepBox $w={20} />
            <Slot $w={24} aria-label="清除格式">
              <EraserIcon />
            </Slot>
            <Slot $w={42} aria-label="拼音指南">
              <PinyinIcon />
            </Slot>
            <Slot $w={22}>
              <BoxedA>A</BoxedA>
            </Slot>
          </ToolRow>
          <ToolRow>
            <Slot $w={32}>
              <Glyph>B</Glyph>
            </Slot>
            <Slot $w={32}>
              <Glyph $italic>I</Glyph>
            </Slot>
            <SplitHot>
              <HotButton $w={32}>
                <Glyph $line="underline">U</Glyph>
              </HotButton>
              <HotButton $w={16} aria-label="下划线样式">
                <Down />
              </HotButton>
            </SplitHot>
            <Slot $w={34}>
              <Glyph $size={14} $line="line-through">abc</Glyph>
            </Slot>
            <Slot $w={34}>
              <Glyph>x<sub>2</sub></Glyph>
            </Slot>
            <Slot $w={32}>
              <Glyph>x<sup>2</sup></Glyph>
            </Slot>
            <SepBox $w={12} />
            <Slot $w={28}>
              <Glyph $sans $size={20} $color="#c9c9cc">A</Glyph>
            </Slot>
            <Drop w={10} />
            <ColorBarButton $w={36} $bar="#ffff00" aria-label="突出显示">
              <HighlightIcon />
            </ColorBarButton>
            <Drop w={12} />
            <ColorBarButton $w={36} $bar="#ff0000">
              <Glyph $size={20} $color="#3a5ba5">A</Glyph>
            </ColorBarButton>
            <Drop w={12} />
            <Slot $w={36}>
              <BoxedA $filled>A</BoxedA>
            </Slot>
            <Slot $w={30}>
              <CircledChar $size={13} $light>字</CircledChar>
            </Slot>
          </ToolRow>
        </ToolRows>
      </GroupBody>
      <GroupFooter>
        <span>字体</span>
        <Launcher />
      </GroupFooter>
    </Group>
  );
}

function ParagraphGroup() {
  return (
    <Group $w={365}>
      <GroupBody $pl={4}>
        <ToolRows>
          <ToolRow>
            <Slot $w={36} aria-label="项目符号">
              <ListIcon kind="bullet" />
            </Slot>
            <Drop />
            <Slot $w={38} aria-label="编号">
              <ListIcon kind="number" />
            </Slot>
            <Drop />
            <Slot $w={32} aria-label="多级列表">
              <ListIcon kind="multi" />
            </Slot>
            <Drop />
            <SepBox $w={14} />
            <Slot $w={32} aria-label="减少缩进量">
              <IndentIcon />
            </Slot>
            <Slot $w={30} aria-label="增加缩进量">
              <IndentIcon right />
            </Slot>
            <SepBox $w={12} />
            <Slot $w={30} aria-label="中文版式">
              <AsianLayoutIcon />
            </Slot>
            <Drop />
            <SepBox $w={18} />
            <Slot $w={26} aria-label="排序">
              <SortIcon />
            </Slot>
            <SepBox $w={18} />
            <Slot $w={28} aria-label="显示编辑标记">
              <ShowMarksIcon />
            </Slot>
          </ToolRow>
          <ToolRow>
            <Slot $w={36} aria-label="左对齐">
              <Lines rows={leftRows} />
            </Slot>
            <Slot $w={30} aria-label="居中">
              <Lines rows={centerRows} />
            </Slot>
            <Slot $w={36} aria-label="右对齐">
              <Lines rows={rightRows} />
            </Slot>
            <HotButton $w={32} aria-label="两端对齐">
              <Lines rows={fullRows} />
            </HotButton>
            <Slot $w={32} aria-label="分散对齐">
              <DistributeIcon />
            </Slot>
            <SepBox $w={10} />
            <Slot $w={32} aria-label="行距">
              <LineSpacingIcon />
            </Slot>
            <Drop />
            <SepBox $w={14} />
            <ColorBarButton $w={34} $bar="#fff" $outline aria-label="底纹">
              <FillIcon />
            </ColorBarButton>
            <Drop w={12} />
            <Slot $w={34} aria-label="边框">
              <BorderIcon />
            </Slot>
            <Drop />
          </ToolRow>
        </ToolRows>
      </GroupBody>
      <GroupFooter>
        <span>段落</span>
        <Launcher />
      </GroupFooter>
    </Group>
  );
}

function StylesGroup() {
  return (
    <Group>
      <GroupBody>
        <GalleryWrap>
          <Gallery>
            {styleCards.map((card) => (
              <StyleCard key={card.name} $active={card.active}>
                <Preview
                  $size={card.size}
                  $bold={card.bold}
                  $italic={card.italic}
                  $sans={card.sans}
                  $caps={card.caps}
                  $color={card.color}
                >
                  {card.sample}
                </Preview>
                <StyleName>
                  {card.mark && <Mark color="#555" />}
                  {card.name}
                </StyleName>
              </StyleCard>
            ))}
          </Gallery>
          <GalleryScroll>
            <button aria-label="上一行">
              <Up color="#bbb" />
            </button>
            <button aria-label="下一行">
              <Down />
            </button>
            <button aria-label="其他">
              <svg width="8" height="9" viewBox="0 0 8 9">
                <path d="M0 1h8" stroke="#555" />
                <path d="M0 4h8L4 9z" fill="#555" />
              </svg>
            </button>
          </GalleryScroll>
        </GalleryWrap>
        <BigButton $w={85}>
          <ChangeStylesIcon />
          <span>更改样式</span>
          <Down />
        </BigButton>
      </GroupBody>
      <GroupFooter>
        <span>样式</span>
        <Launcher />
      </GroupFooter>
    </Group>
  );
}

const Translate = styled(BigButton)`
  span {
    margin: 9px 0 0;
    line-height: 25px;
    white-space: pre;
  }
`;

function NavigationPane() {
  return (
    <NavPane>
      <NavHeader>
        <h2>导航</h2>
        <button aria-label="任务窗格选项">
          <Down size={12} color="#333" />
        </button>
        <button aria-label="关闭">
          <svg width="10" height="10" viewBox="0 0 10 10" stroke="#444" strokeWidth="3">
            <path d="M1 1l8 8M9 1L1 9" />
          </svg>
        </button>
      </NavHeader>
      <SearchBox>
        <input aria-label="搜索文档" placeholder="搜索文档" />
        <SearchIcon />
        <Down />
      </SearchBox>
      <NavTabs>
        {navTabIcons.map((icon, i) => (
          <NavTab key={i} $active={i === 0} aria-label="浏览方式">
            {icon}
          </NavTab>
        ))}
        <NavArrows>
          <button aria-label="上一标题">
            <Up size={12} color="#555" />
          </button>
          <button aria-label="下一标题">
            <Down size={12} color="#555" />
          </button>
        </NavArrows>
      </NavTabs>
      <NavBody>
        <NavList>
          <NavTree>
            <NavTop href="#top" $level={0} aria-label="跳转到文档开头">
              <svg width="10" height="9" viewBox="0 0 10 9">
                <path d="M0 1h10" stroke="#444" strokeWidth="1.500" />
                <path d="M1 8h8L5 3z" fill="#444" />
              </svg>
            </NavTop>
            {outline.map(([level, text, open]) => (
              <NavItem
                key={text}
                href="#heading"
                $level={level}
                $active={text.startsWith("泰山")}
              >
                <Twisty>
                  {open && (
                    <svg width="9" height="9" viewBox="0 0 9 9">
                      <path d="M9 0v9H0z" fill="#333" />
                    </svg>
                  )}
                </Twisty>
                <span>{text}</span>
              </NavItem>
            ))}
          </NavTree>
        </NavList>
        <NavScroll>
          <ScrollButton aria-label="向上滚动">
            <Up size={13} color="#4a5a80" />
          </ScrollButton>
          <ScrollThumb $h={448} aria-label="滚动条">
            <Grip />
          </ScrollThumb>
          <NavScrollEnd aria-label="向下滚动">
            <Down size={12} color="#4a5a80" />
          </NavScrollEnd>
        </NavScroll>
      </NavBody>
    </NavPane>
  );
}

function AbstractPage() {
  return (
    <Page>
      <PageBody>
        <Abstract>
          <TextLine $justify>
            can explore user behavior patterns to provide scientific basis for community
          </TextLine>
          <TextLine $justify>
            management decisions. At the same time, consideration can also be given to
          </TextLine>
          <TextLine>
            integration with other smart devices (such as smart homes, smart parking systems, etc.)
          </TextLine>
          <TextLine>
            to create a smarter and more convenient community living environment.
            <Mark />
          </TextLine>
          <TextLine>
            {"【Key words】Smart Community\u3000JAVA Technology Stack\u3000Customer Side"}
          </TextLine>
          <TextLine $lh={34} $indent={19}>
            Administrator Side
            <Mark />
          </TextLine>
          <EmptyLine $h={32}>
            <Mark />
          </EmptyLine>
          <EmptyLine $h={46}>
            <Mark />
          </EmptyLine>
        </Abstract>
      </PageBody>
      <PageFooter>
        <Crop />
        <span>
          -IV-
          <Mark />
        </span>
        <Crop $right />
      </PageFooter>
    </Page>
  );
}

function ContentsPage() {
  return (
    <Page>
      <PageBody>
        <EmptyLine $h={10} $center>
          <Mark />
        </EmptyLine>
        <TocTitle>
          {"目\u3000 录"}
          <Mark />
        </TocTitle>
        <EmptyLine $h={38}>
          <Mark />
        </EmptyLine>
        <Toc>
          {contents.map(([level, text, page]) => (
            <TocRow key={text} href="#section" $level={level}>
              {text}
              <Leader />
              {page}
              <Mark />
            </TocRow>
          ))}
        </Toc>
      </PageBody>
      <PageFooter>
        <Crop />
        <span>
          -V-
          <Mark />
        </span>
        <Crop $right />
      </PageFooter>
    </Page>
  );
}

function InputMethodBar() {
  return (
    <ImeBar>
      <ImeLogo width="50" height="48" viewBox="0 0 50 48">
        <path d="M3 10Q22 5 38 1q3 0 4 3 2 16 6 31 0 3-3 4-12 6-30 7-3 0-4-3Q7 28 1 14q0-3 2-4z" fill="#f4581f" />
        <path
          d="M37 12C25 9 10 14 12 20c2 5 26 1 27 8 0 7-16 9-28 5"
          fill="none"
          stroke="#fff"
          strokeWidth="6"
        />
      </ImeLogo>
      <button>英</button>
      <button aria-label="中英文标点">
        <svg width="18" height="18" viewBox="0 0 18 18" fill="currentColor">
          <circle cx="4" cy="5" r="3" />
          <path d="M11 9a3 3 0 1 1 6 1q0 5-5 7 2-3 2-4-3 0-3-4z" />
        </svg>
      </button>
      <button aria-label="语音">
        <svg width="18" height="24" viewBox="0 0 18 24" fill="none" stroke="currentColor" strokeWidth="2">
          <rect x="5" y="1" width="8" height="14" rx="4" fill="currentColor" />
          <path d="M1 11c1 9 15 9 16 0M9 18v5M6 22.500h6" />
        </svg>
      </button>
      <button aria-label="软键盘">
        <svg width="23" height="20" viewBox="0 0 23 20" fill="none" stroke="currentColor" strokeWidth="2">
          <rect x="1" y="1" width="21" height="18" rx="2" />
          <path d="M4 5.500h15M4 10h15" strokeDasharray="3 1" strokeWidth="3" />
          <path d="M6 15h11" />
        </svg>
      </button>
      <button aria-label="皮肤">
        <svg width="24" height="22" viewBox="0 0 24 22" fill="currentColor">
          <path d="M1 3l6-2q5 4 10 0l6 2v7l-4 1v9q0 2-2 2H7q-2 0-2-2v-9l-4-1z" />
        </svg>
      </button>
      <button aria-label="游戏">
        <svg width="24" height="20" viewBox="0 0 24 20" fill="currentColor">
          <path d="M7 0h10q6 1 7 8 0 6-6 6H6q-6 0-6-6 1-7 7-8z" />
          <path d="M1 14l6 2-3 4q-3-1-3-6zM23 14l-6 2 3 4q3-1 3-6z" />
          <path d="M5 7h6M8 4v6" stroke="#fff" strokeWidth="2" />
          <circle cx="16" cy="5" r="1.500" fill="#fff" />
          <circle cx="18" cy="9" r="1.500" fill="#fff" />
        </svg>
      </button>
      <button aria-label="工具箱">
        <svg width="20" height="20" viewBox="0 0 20 20" fill="currentColor">
          <rect width="9" height="9" rx="3" />
          <rect y="11" width="9" height="9" rx="3" />
          <rect x="11" y="11" width="9" height="9" rx="3" />
          <rect x="12" y="1" width="7" height="7" rx="2" fill="none" stroke="currentColor" strokeWidth="2" />
        </svg>
      </button>
      <button aria-label="智能助手">
        <svg width="20" height="22" viewBox="0 0 20 22" fill="currentColor">
          <path d="M10 0l3 4h6l-2 6 3 4-3 2v3h-4l-3 3-3-3H3v-3l-3-2 3-4-2-6h6z" opacity="0.7" />
          <path d="M10 4q6 4 6 9-1 4-3 7h-2v-7H9v7H7q-2-3-3-7 0-5 6-9z" />
          <circle cx="10" cy="12" r="2" fill="#fff" />
          <path d="M10 13v8" stroke="#fff" />
        </svg>
      </button>
    </ImeBar>
  );
}

function Status() {
  return (
    <StatusBar>
      <StatusItem>页面: 5/68</StatusItem>
      <SepBox $w={1} $h={28} $color="#8f959c" />
      <StatusItem>字数: 20,347</StatusItem>
      <SepBox $w={1} $h={28} $color="#8f959c" />
      <StatusItem>
        <ProofIcon />
        英语(美国)
      </StatusItem>
      <SepBox $w={1} $h={28} $color="#8f959c" />
      <StatusItem>插入</StatusItem>
      <SepBox $w={1} $h={28} $color="#8f959c" />
      <StatusRight>
        <SepBox $w={11} $h={28} $color="#8f959c" />
        <ViewHot $w={28} aria-label="页面视图">
          <PrintLayoutIcon />
        </ViewHot>
        <Slot $w={27} aria-label="阅读版式视图">
          <ReadIcon />
        </Slot>
        <Slot $w={26} aria-label="Web 版式视图">
          <WebIcon />
        </Slot>
        <Slot $w={30} aria-label="大纲视图">
          <ThinLines outline />
        </Slot>
        <Slot $w={27} aria-label="草稿">
          <ThinLines />
        </Slot>
        <ZoomLabel>80%</ZoomLabel>
        <ZoomButton $ml={6} aria-label="缩小">
          <svg width="12" height="12" viewBox="0 0 12 12">
            <path d="M0 6h12" stroke="#666" strokeWidth="3" />
          </svg>
        </ZoomButton>
        <ZoomSlider type="range" min="0" max="100" defaultValue="40" aria-label="显示比例" />
        <ZoomButton aria-label="放大">
          <svg width="12" height="12" viewBox="0 0 12 12">
            <path d="M0 6h12M6 0v12" stroke="#666" strokeWidth="3" />
          </svg>
        </ZoomButton>
      </StatusRight>
    </StatusBar>
  );
}

function App() {
  return (
    <Window>
      <GlobalStyle />
      <TopBar />
      <RibbonTabs />
      <Ribbon>
        <ClipboardGroup />
        <FontGroup />
        <ParagraphGroup />
        <StylesGroup />
        <Group $w={96}>
          <GroupBody $pl={9}>
            <SideList $gap={7} $pt={7}>
              <SideButton>
                <FindIcon />
                查找
                <Down />
              </SideButton>
              <SideButton>
                <ReplaceIcon />
                替换
              </SideButton>
              <SideButton>
                <SelectIcon />
                选择
                <Down />
              </SideButton>
            </SideList>
          </GroupBody>
          <GroupFooter>
            <span>编辑</span>
          </GroupFooter>
        </Group>
        <Group $w={89}>
          <GroupBody>
            <Translate $w={89}>
              <TranslateIcon />
              <span>{"打开\n有道翻译"}</span>
            </Translate>
          </GroupBody>
          <GroupFooter>
            <span>有道翻译</span>
          </GroupFooter>
        </Group>
        <Group $w={17} />
      </Ribbon>
      <WorkArea>
        <NavigationPane />
        <Canvas>
          <AbstractPage />
          <ContentsPage />
        </Canvas>
        <DocScroll>
          <SplitHandle aria-label="拆分">
            <svg width="12" height="3" viewBox="0 0 12 3">
              <path d="M0 1.500h12" stroke="#777" strokeWidth="3" />
            </svg>
          </SplitHandle>
          <RulerToggle aria-label="标尺">
            <svg width="16" height="16" viewBox="0 0 16 16" fill="#f4f5f8" stroke="#666">
              <path d="M3 3h12v8H3z" />
              <path d="M1 1h6v3L4 7 1 4zM10 9l3 3v3H7v-3z" />
              <path d="M9 6v2M12 6v2" />
            </svg>
          </RulerToggle>
          <DocArrow aria-label="向上滚动">
            <Up size={13} color="#555" />
          </DocArrow>
          <DocThumb aria-label="滚动条">
            <Grip />
          </DocThumb>
          <DocScrollEnd>
            <DocArrow aria-label="向下滚动">
              <Down size={13} color="#555" />
            </DocArrow>
            <DocArrow aria-label="前一页">
              <Up size={8} color="#555" />
            </DocArrow>
            <DocArrow aria-label="选择浏览对象">
              <svg width="9" height="9" viewBox="0 0 9 9">
                <circle cx="4.500" cy="4.500" r="3.500" fill="none" stroke="#555" />
              </svg>
            </DocArrow>
            <DocArrow aria-label="下一页">
              <svg width="8" height="9" viewBox="0 0 8 9" fill="#444">
                <path d="M0 0h8L4 4zM0 5h8L4 9z" />
              </svg>
            </DocArrow>
          </DocScrollEnd>
        </DocScroll>
      </WorkArea>
      <Status />
      <InputMethodBar />
    </Window>
  );
}

export default App;
